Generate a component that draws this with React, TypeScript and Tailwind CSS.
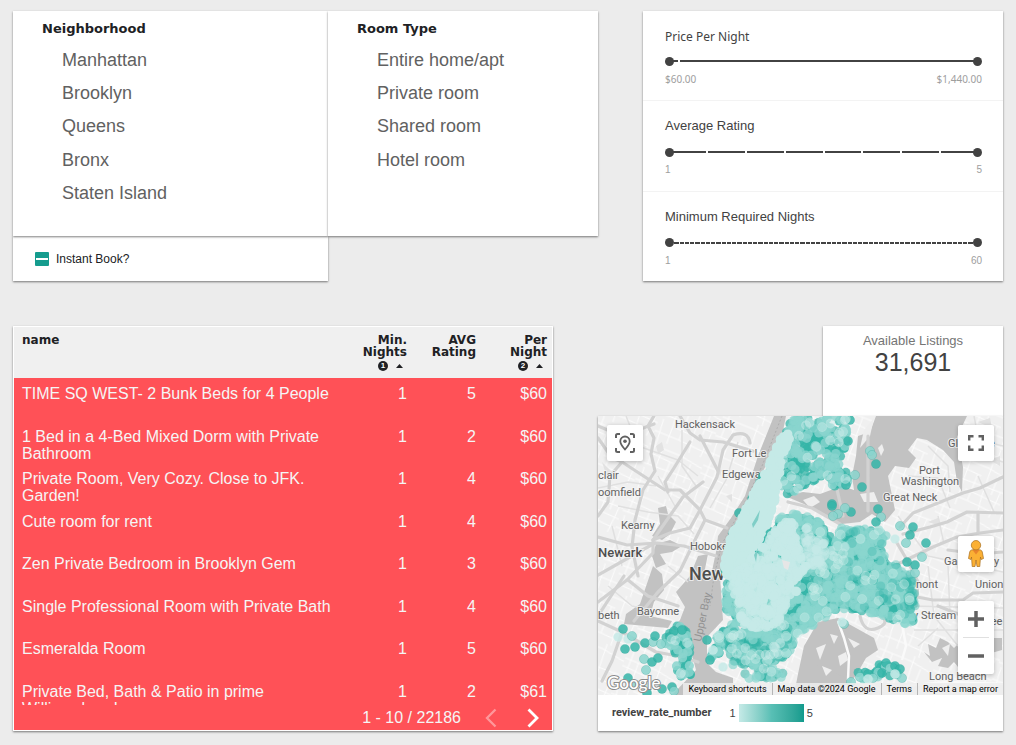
import React from "react";

const card = "bg-white shadow-[0_1px_2px_rgba(0,0,0,0.5)]";

const neighborhoods = ["Manhattan", "Brooklyn", "Queens", "Bronx", "Staten Island"];
const roomTypes = ["Entire home/apt", "Private room", "Shared room", "Hotel room"];

const listings = [
  { name: "TIME SQ WEST- 2 Bunk Beds for 4 People", nights: 1, rating: 5, price: "$60" },
  { name: "1 Bed in a 4-Bed Mixed Dorm with Private Bathroom", nights: 1, rating: 2, price: "$60" },
  { name: "Private Room, Very Cozy. Close to JFK. Garden!", nights: 1, rating: 4, price: "$60" },
  { name: "Cute room for rent", nights: 1, rating: 4, price: "$60" },
  { name: "Zen Private Bedroom in Brooklyn Gem", nights: 1, rating: 3, price: "$60" },
  { name: "Single Professional Room with Private Bath", nights: 1, rating: 4, price: "$60" },
  { name: "Esmeralda Room", nights: 1, rating: 5, price: "$60" },
  { name: "Private Bed, Bath & Patio in prime Williamsburg!", nights: 1, rating: 2, price: "$61" },
];

function FilterList({ title, items }: { title: string; items: string[] }) {
  return (
    <section className={`relative z-10 h-[225px] pl-[29px] ${card}`}>
      <h2 className="pt-[9px] font-['DejaVu_Sans',sans-serif] text-[13px] leading-[18px] font-bold text-[#202124]">
        {title}
      </h2>
      <ul className="mt-[5px] grid h-[167px] grid-rows-5 pl-5">
        {items.map((item) => (
          <li key={item} className="flex items-center">
            <button type="button" className="text-lg leading-6 text-[#616161]">{item}</button>
          </li>
        ))}
      </ul>
    </section>
  );
}

const thumb =
  "pointer-events-none absolute inset-0 h-full w-full appearance-none bg-transparent [&::-webkit-slider-thumb]:pointer-events-auto [&::-webkit-slider-thumb]:h-[9px] [&::-webkit-slider-thumb]:w-[9px] [&::-webkit-slider-thumb]:appearance-none [&::-webkit-slider-thumb]:rounded-full [&::-webkit-slider-thumb]:bg-[#424242]";

type RangeProps = {
  label: string;
  min: number;
  max: number;
  low: string;
  high: string;
  segments: number[];
  humanist?: boolean;
  fine?: boolean;
};

function RangeFilter({ label, min, max, low, high, segments, humanist, fine }: RangeProps) {
  const [from, setFrom] = React.useState(min);
  const [to, setTo] = React.useState(max);
  return (
    <fieldset
      className={`min-w-0 flex-1 border-t border-[#f3f3f3] pr-[21px] pl-[22px] first:border-t-0 ${
        humanist ? "font-['Noto_Sans',sans-serif]" : ""
      }`}
    >
      <div className={`leading-[18px] text-[#424242] ${humanist ? "pt-[17px] text-[12px]" : "pt-4 text-[13px]"}`}>{label}</div>
      <div className={`relative h-[10px] ${humanist ? "mt-[10px]" : "mt-3"}`}>
        <div className={`flex h-full items-center px-1 ${fine ? "gap-px" : "gap-[2px]"}`}>
          {segments.map((grow, i) => (
            <span key={i} className="h-[2px] bg-[#424242]" style={{ flexGrow: grow }} />
          ))}
        </div>
        <input type="range" aria-label={`${label} from`} min={min} max={max} value={from} onChange={(e) => setFrom(Number(e.target.value))} className={thumb} />
        <input type="range" aria-label={`${label} to`} min={min} max={max} value={to} onChange={(e) => setTo(Number(e.target.value))} className={thumb} />
      </div>
      <div className="mt-[6px] flex justify-between text-[10px] leading-[14px] text-[#9e9e9e]">
        <span>{low}</span>
        <span>{high}</span>
      </div>
    </fieldset>
  );
}

function SortMark({ order }: { order: number }) {
  return (
    <span className="mt-[3px] flex items-center justify-end gap-2 pr-1">
      <span className="flex h-[10px] w-[10px] items-center justify-center rounded-full bg-[#202124] font-['Liberation_Sans',sans-serif] text-[8px] leading-[10px] text-white">
        {order}
      </span>
      <svg width="7" height="4" viewBox="0 0 7 4" aria-hidden="true">
        <path d="M0 4 3.500 0 7 4Z" fill="#202124" />
      </svg>
    </span>
  );
}

function ListingsTable() {
  const th = "pt-[7px] pl-2 text-right align-top pr-[5px] leading-[12px]";
  const td = "pt-[7px] pr-[5px] text-right align-top";
  return (
    <section className={`flex h-[405px] flex-col border border-white ${card}`}>
      <div className="h-[378px] overflow-hidden bg-[#ff5157]">
        <table className="w-full table-fixed border-collapse">
          <colgroup>
            <col />
            <col className="w-[70px]" />
            <col className="w-[69px]" />
            <col className="w-[71px]" />
          </colgroup>
          <thead>
            <tr className="h-[51px] bg-[#f0f0f0] font-['DejaVu_Sans',sans-serif] text-[12px] text-[#202124]">
              <th className="pt-[7px] pl-2 text-left align-top leading-[12px]">name</th>
              <th className={th}>Min. Nights<SortMark order={1} /></th>
              <th className={th}>AVG Rating</th>
              <th className={th}>Per Night<SortMark order={2} /></th>
            </tr>
          </thead>
          <tbody className="text-base leading-[17px] text-[#f5f5f5]">
            {listings.map((l) => (
              <tr key={l.name} className="odd:h-[43px] even:h-[42px]">
                <td className="pt-[7px] pr-1 pl-2 align-top">{l.name}</td>
                <td className={td}>{l.nights}</td>
                <td className={td}>{l.rating}</td>
                <td className={td}>{l.price}</td>
              </tr>
            ))}
          </tbody>
        </table>
      </div>
      <footer className="flex flex-1 items-center justify-end bg-[#ff5157] pr-[13px] text-base leading-5 text-[#f5f5f5]">
        <span>1 - 10 / 22186</span>
        <button type="button" aria-label="Previous page" className="ml-6 opacity-40">
          <svg width="12" height="20" viewBox="0 0 12 20" fill="none" stroke="#fff" strokeWidth="2.300"><path d="M10.500 1.500 2 10 10.500 18.500" /></svg>
        </button>
        <button type="button" aria-label="Next page" className="ml-[30px]">
          <svg width="12" height="20" viewBox="0 0 12 20" fill="none" stroke="#fff" strokeWidth="2.800"><path d="M1.500 1.500 10 10 1.500 18.500" /></svg>
        </button>
      </footer>
    </section>
  );
}

type Point = [number, number];
type Dot = { x: number; y: number; fill: string; opacity: number; ring: boolean };

const DARK = "#35b5a8";
const MID = "#8ad5ce";
const LIGHT = "#c5eae7";

function makeRandom(seed: number) {
  let s = seed;
  return () => {
    s = (s * 1664525 + 1013904223) % 4294967296;
    return s / 4294967296;
  };
}

function inside(x: number, y: number, poly: Point[]) {
  let hit = false;
  for (let i = 0, j = poly.length - 1; i < poly.length; j = i++) {
    const [xi, yi] = poly[i];
    const [xj, yj] = poly[j];
    if (yi > y !== yj > y && x < ((xj - xi) * (y - yi)) / (yj - yi) + xi) hit = !hit;
  }
  return hit;
}

function scatter(poly: Point[], count: number, seed: number, fill: string, opacity: number, ring = false): Dot[] {
  const rnd = makeRandom(seed);
  const xs = poly.map((p) => p[0]);
  const ys = poly.map((p) => p[1]);
  const x0 = Math.min(...xs);
  const y0 = Math.min(...ys);
  const w = Math.max(...xs) - x0;
  const h = Math.max(...ys) - y0;
  const dots: Dot[] = [];
  let guard = 0;
  while (dots.length < count && guard++ < count * 30) {
    const x = x0 + rnd() * w;
    const y = y0 + rnd() * h;
    if (inside(x, y, poly)) dots.push({ x, y, fill, opacity, ring });
  }
  return dots;
}

const bronx: Point[] = [[190, 5], [196, 1], [222, 1], [226, 6], [230, 0], [248, 0], [249, 22], [246, 38], [243, 48], [252, 62], [246, 72], [236, 72], [228, 60], [212, 66], [203, 72], [190, 80], [183, 76], [184, 40]];
const outer: Point[] = [[165, 125], [180, 104], [188, 98], [206, 98], [222, 106], [230, 118], [236, 124], [243, 112], [262, 112], [283, 114], [290, 122], [282, 132], [292, 146], [306, 155], [315, 165], [316, 205], [306, 208], [290, 202], [270, 197], [256, 194], [240, 192], [224, 204], [210, 212], [200, 217], [192, 236], [184, 244], [172, 246], [160, 250], [143, 246], [130, 232], [126, 230], [115, 246], [112, 240], [118, 226], [114, 222], [126, 214], [136, 204], [126, 190], [128, 168]];
const manhattan: Point[] = [[184, 20], [190, 18], [194, 22], [184, 40], [181, 66], [177, 86], [171, 104], [161, 125], [152, 150], [137, 160], [128, 160], [125, 150], [133, 120], [147, 94], [166, 56], [178, 32]];
const brooklynLight: Point[] = [[158, 138], [174, 118], [186, 104], [196, 106], [200, 122], [202, 140], [210, 150], [200, 160], [204, 172], [192, 182], [186, 192], [182, 206], [168, 212], [152, 212], [138, 206], [144, 190], [130, 176], [132, 162]];
const queensLight: Point[] = [[205, 110], [222, 116], [230, 134], [240, 130], [250, 130], [240, 140], [226, 150], [214, 150], [206, 138]];
const south: Point[] = [[128, 216], [190, 208], [190, 236], [178, 250], [190, 262], [150, 264], [134, 250]];
const east: Point[] = [[240, 114], [284, 114], [318, 160], [317, 208], [255, 190]];
const eastEdge: Point[] = [[306, 158], [316, 166], [318, 208], [300, 208], [312, 196], [308, 176]];
const statenEast: Point[] = [[78, 208], [88, 210], [90, 225], [96, 240], [92, 254], [96, 262], [82, 264], [78, 250], [76, 232], [66, 228], [68, 220]];
const rockaway: Point[] = [[260, 256], [276, 256], [284, 245], [298, 250], [302, 260], [284, 260], [262, 266]];

const strays: [number, number, string][] = [
  [252, 4, DARK], [250, 25, DARK], [272, 35, MID], [274, 39, MID], [278, 48, DARK], [264, 71, DARK], [257, 59, MID], [248, 69, DARK], [234, 88, DARK], [240, 98, MID], [253, 96, DARK], [247, 92, MID], [234, 90, DARK], [235, 100, MID],
  [280, 93, DARK], [283, 101, MID], [278, 106, DARK], [302, 110, MID], [315, 111, DARK], [312, 119, DARK], [308, 127, MID], [328, 127, DARK], [324, 141, MID], [317, 149, DARK], [309, 146, DARK], [317, 157, MID], [297, 123, LIGHT],
  [25, 213, DARK], [20, 221, LIGHT], [30, 223, LIGHT], [27, 233, DARK], [37, 231, DARK], [34, 220, MID], [47, 227, DARK], [55, 226, MID], [63, 228, MID], [57, 220, DARK], [72, 221, DARK], [76, 215, DARK], [84, 214, DARK], [46, 243, MID], [54, 246, DARK], [60, 242, DARK], [48, 254, MID], [30, 262, DARK], [35, 269, MID], [47, 269, LIGHT], [49, 277, DARK], [64, 273, DARK], [74, 271, DARK], [76, 275, MID],
  [246, 208, MID], [244, 206, LIGHT], [253, 266, MID], [262, 261, MID], [270, 258, DARK], [275, 262, MID], [284, 257, DARK], [288, 247, DARK], [292, 252, MID], [297, 250, DARK], [302, 253, DARK], [304, 262, MID], [297, 258, LIGHT], [270, 263, LIGHT],
  [141, 97, DARK], [125, 251, LIGHT], [112, 244, DARK], [109, 224, DARK], [115, 234, LIGHT],
];

const dots: Dot[] = [
  ...scatter(bronx, 170, 3, DARK, 0.75),
  ...scatter(outer, 620, 5, DARK, 0.7),
  ...scatter(manhattan, 70, 8, DARK, 0.8),
  ...scatter(statenEast, 42, 9, DARK, 0.75),
  ...scatter(rockaway, 20, 12, DARK, 0.8),
  ...scatter(bronx, 105, 13, MID, 0.8),
  ...scatter(outer, 800, 17, MID, 0.7),
  ...scatter(statenEast, 18, 19, MID, 0.85),
  ...scatter(rockaway, 8, 21, MID, 0.8),
  ...scatter(south, 60, 23, DARK, 0.55),
  ...scatter(south, 40, 24, MID, 0.7),
  ...scatter(east, 34, 25, DARK, 0.35),
  ...scatter(eastEdge, 14, 26, DARK, 0.4),
  ...strays.map(([x, y, fill]) => ({ x, y, fill, opacity: 0.85, ring: true })),
  ...scatter(bronx, 20, 29, LIGHT, 0.5, true),
  ...scatter(outer, 85, 31, LIGHT, 0.45, true),
  ...scatter(south, 12, 32, LIGHT, 0.5, true),
  ...scatter(statenEast, 5, 33, LIGHT, 0.5, true),
  ...scatter(queensLight, 45, 37, LIGHT, 0.55),
  ...scatter(manhattan, 420, 41, LIGHT, 1),
  ...scatter(brooklynLight, 330, 43, LIGHT, 0.85),
];

const toPath = (poly: Point[]) => `M${poly.map((p) => p.join(" ")).join("L")}Z`;

const highways = [
  "M0 22 14 42 24 46 67 74 82 74 102 94 107 104 129 112",
  "M92 26 76 52 67 66 70 76",
  "M152 27Q150 14 135 19L125 34 119 61 102 94 92 112 72 117 55 124 55 137 29 164 0 186",
  "M82 0 92 17 102 24 125 26 138 30 155 35",
  "M56 0 50 10 56 22 53 38 57 55 45 74 37 104 34 131 40 160",
  "M0 121 29 129 59 127 86 130 118 140",
  "M0 159 39 137 57 127",
  "M105 66 85 81 64 111 55 124",
  "M107 104 97 124 82 155 60 176 36 205",
  "M102 20 120 55",
  "M0 100 10 86 12 60 24 46",
  "M0 10 24 20 56 8",
  "M26 160 0 200M30 164 50 180 80 190",
  "M0 205 24 216 58 236 80 240 100 246",
  "M24 216 14 245 4 265",
  "M405 61 382 72 365 77 335 89 315 97 302 111",
  "M405 97 369 96 349 106 332 111 305 118",
  "M405 114 382 117 359 121 335 131 302 147",
  "M380 96 380 117",
  "M299 127 309 144 320 166 319 181 335 184 365 184 375 177 405 176",
  "M405 206 370 202 340 190",
  "M270 20V95M236 60 245 100",
  "M190 86 214 92 242 108",
  "M405 136 380 138 350 134",
  "M262 200Q266 218 280 212T280 198",
];

const sideRoads = "M28 0 40 30 80 44 100 60M0 72 30 66 58 70M20 90 50 96 80 100 96 118M14 110 24 150M60 60 78 92M140 26 128 64 112 92M70 150 90 166M10 170 34 190 60 196M310 60 340 62 352 92M330 30 350 50 352 76M366 20 405 30M376 0 384 40 405 46M300 100 330 140 405 156M330 150 336 200 360 230M350 150 352 200M312 190 405 192M316 214 405 214M320 230 340 212M84 14 84 50 98 70M380 60 396 96M340 100 346 128";

const water = [
  "M176 0H188L184 20 165 55 145 93 128 130 122 160 125 204 109 221 109 247 118 256 135 262V279H74L98 254 92 231 69 217 82 204 87 191 78 176 92 160 100 140 110 138 106 158 114 155 118 136 120 120 133 102 147 80 160 40Z",
  "M60 92 68 90 70 98 78 106 72 118 64 124 54 120 62 108Z",
  "M58 128 72 124 84 130 74 136 62 138 68 148 58 152 54 140Z",
  "M55 150 64 158 66 174 56 186 52 200 74 205 70 212 26 208 28 198 42 188Z",
  "M187 80 205 76 222 78 244 70 256 74 254 60 258 40 260 20 272 16 278 0H369L359 21 365 51 364 76 359 66 356 46 345 34 329 24 319 22 310 34 318 42 311 52 297 50 290 60 297 94 287 106 274 98 262 106 244 108 226 100 206 88Z",
  "M200 258 206 230 220 206 240 202 258 212 276 222 280 234 268 242 260 256 252 268 196 279Z",
  "M215 248 248 262 240 279H190Z",
  "M326 236 332 240 330 228 338 232 342 222 350 226 356 232 362 226 380 230 386 222 404 222V234L390 238 380 250 364 256 356 246 350 252 340 250 344 242 334 246Z",
];

const islands = [
  "M262 78 276 76 280 86 266 86Z",
  "M205 84 216 80 222 86 212 92Z",
  "M266 14 276 2 272 20 262 32Z",
  "M232 218 240 220 236 228Z",
  "M218 232 228 228 222 244Z",
  "M250 222 262 228 256 232Z",
  "M240 240 248 236 250 244 242 250Z",
  "M224 250 234 254 228 260Z",
  "M344 232 352 228 350 240Z",
  "M366 232 376 234 370 240Z",
  "M284 28 286 34 283 40 280 32Z",
];

const labels: [number, number, string][] = [
  [77, 12, "Hackensack"], [134, 41, "Fort Le"], [124, 62, "Edgewa"], [0, 63, "clair"], [0, 80, "oomfield"], [23, 113, "Kearny"],
  [92, 134, "Hoboke"], [39, 199, "Bayonne"], [0, 203, "beth"], [321, 58, "Port"], [303, 69, "Washington"],
  [285, 85, "Great Neck"], [350, 31, "Gl"], [391, 31, "e"], [346, 149, "Ga"], [396, 149, "y"], [318, 172, "nont"],
  [377, 172, "Union"], [315, 203, "y Stream"], [389, 209, "ree"], [331, 264, "Long Beach"],
];

function MapDrawing() {
  return (
    <svg viewBox="0 0 405 279" preserveAspectRatio="xMidYMid slice" className="block h-full w-full font-['Roboto',sans-serif]" role="img" aria-label="Map of listings">
      <defs>
        <pattern id="streets" width="58" height="52" patternUnits="userSpaceOnUse" patternTransform="rotate(22)">
          <path d="M0 6H34L58 10M0 14 30 16M0 26 58 24M20 34 58 36M0 44H26L58 46M6 0V26M14 6 16 52M26 16V44M36 0 38 36M46 10V30M54 24 52 52M38 36 40 52M4 30 6 52" stroke="#fdfdfd" strokeWidth=".9" fill="none" />
        </pattern>
      </defs>
      <rect width="405" height="279" fill="#f0f0f0" />
      <rect width="405" height="279" fill="url(#streets)" />
      <g fill="#e2e2e2">
        <path d="M58 30 64 26 66 34 60 38ZM118 52 124 54 122 60ZM128 80 134 78 134 86ZM4 46 14 56 10 64ZM380 6 392 2 394 12ZM330 106 340 102 342 110ZM392 44 402 40 402 50Z" />
      </g>
      <g fill="#c2c2c2">{water.map((d) => <path key={d} d={d} />)}</g>
      <g fill="#eeeeee">{islands.map((d) => <path key={d} d={d} />)}</g>
      <path d={sideRoads} fill="none" stroke="#e0e0e0" strokeWidth="1.500" strokeLinejoin="round" />
      <g fill="none" stroke="#d2d2d2" strokeWidth="3.200" strokeLinejoin="round" strokeLinecap="round">
        {highways.map((d) => <path key={d} d={d} />)}
      </g>
      <path d="M240 205 246 222 251 240 250 264M306 270 350 266 405 268M304 208 308 230 304 244" fill="none" stroke="#fafafa" strokeWidth="2.500" />
      <path d="M184 0 164 50 148 84 124 128 116 160 112 190" fill="none" stroke="#9e9e9e" strokeWidth=".6" strokeDasharray="2 2" />
      <g fill="#616161" stroke="#f5f5f5" strokeWidth="2" strokeOpacity=".8" paintOrder="stroke" fontSize="11">
        {labels.map(([x, y, text]) => <text key={text + x} x={x} y={y}>{text}</text>)}
        <g fontWeight="500" fill="#4e4e4e">
          <text x="0" y="141" fontSize="13">Newark</text>
          <text x="91" y="164" fontSize="18">New</text>
        </g>
      </g>
      <text transform="translate(103 226) rotate(-78)" fontSize="11" fill="#939393">Upper Bay</text>
      <path d={toPath(outer)} fill="#7accc4" />
      <path d={toPath(manhattan)} fill={LIGHT} />
      {dots.map((d, i) => (
        <circle key={i} cx={d.x} cy={d.y} r="4.600" fill={d.fill} fillOpacity={d.opacity} stroke={d.ring ? (d.fill === LIGHT ? "#d8f1ef" : "#239e92") : "none"} strokeOpacity=".35" strokeWidth=".7" />
      ))}
      <path d="M154 108 162 94 160 104 155 112ZM156 139 160 132 158 146Z" fill="#7fcec7" />
      <path d="M184 144 192 146 190 154 186 152ZM140 210 144 211 142 214Z" fill="#e6e6e6" />
      <text x="9" y="273" fontSize="17" fontWeight="500" fontFamily="Lato, sans-serif" fill="#fff" stroke="#8c8c8c" strokeWidth="2" paintOrder="stroke">Google</text>
    </svg>
  );
}

const control = "flex h-9 w-9 items-center justify-center rounded-[2px] bg-white shadow-[0_1px_4px_rgba(0,0,0,0.25)]";

function MapCard() {
  return (
    <section className={`flex h-[315px] flex-col ${card}`}>
      <div className="relative h-[279px] overflow-hidden">
        <MapDrawing />
        <button type="button" aria-label="Reset map view" className={`absolute top-[9px] left-[9px] ${control}`}>
          <svg width="22" height="22" viewBox="0 0 22 22" fill="none" stroke="#616161" strokeWidth="2">
            <path d="M6 2H3.500Q2 2 2 3.500V6M16 2H18.500Q20 2 20 3.500V6M2 16V18.500Q2 20 3.500 20H6M20 16V18.500Q20 20 18.500 20H16" />
            <path d="M11 17.500C7.500 13.500 6.300 11.500 6.300 9.200A4.700 4.700 0 0 1 15.700 9.200C15.700 11.500 14.500 13.500 11 17.500Z" strokeWidth="1.800" />
            <circle cx="11" cy="9.200" r="1.800" fill="#616161" stroke="none" />
          </svg>
        </button>
        <button type="button" aria-label="Toggle fullscreen" className={`absolute top-[9px] right-[9px] ${control}`}>
          <svg width="16" height="16" viewBox="0 0 16 16" fill="none" stroke="#616161" strokeWidth="2.400">
            <path d="M1.200 5.500V1.200H5.500M10.500 1.200H14.800V5.500M1.200 10.500V14.800H5.500M10.500 14.800H14.800V10.500" />
          </svg>
        </button>
        <button type="button" aria-label="Street View" className={`absolute top-[120px] right-[9px] ${control}`}>
          <svg width="18" height="28" viewBox="0 0 18 28" stroke="#a86e20" strokeWidth=".7">
            <path d="M4.500 10Q9 8.500 13.500 10Q15 10.500 15.300 12L16.500 18.500 14 19.500 13.500 17 12.800 26.500H10L9 20 8 26.500H5.200L4.500 17 4 19.500 1.500 18.500 2.700 12Q3 10.500 4.500 10Z" fill="#fbb034" />
            <path d="M5.500 10 9 14.500 12.500 10Z" fill="#e8842c" stroke="none" />
            <circle cx="9" cy="5.200" r="4.700" fill="#fbb034" />
          </svg>
        </button>
        <div className="absolute top-[185px] right-[9px] flex h-[73px] w-9 flex-col rounded-[2px] bg-white px-[5px] shadow-[0_1px_4px_rgba(0,0,0,0.25)]">
          <button type="button" aria-label="Zoom in" className="flex flex-1 items-center justify-center">
            <svg width="16" height="16" viewBox="0 0 16 16"><path d="M8 0V16M0 8H16" stroke="#616161" strokeWidth="3.500" /></svg>
          </button>
          <div className="h-px bg-[#e0e0e0]" />
          <button type="button" aria-label="Zoom out" className="flex flex-1 items-center justify-center">
            <svg width="16" height="4" viewBox="0 0 16 4"><path d="M0 2H16" stroke="#616161" strokeWidth="3.500" /></svg>
          </button>
        </div>
        <div className="absolute right-0 bottom-0 flex h-3 divide-x divide-[#b5b5b5] bg-[#ededed]/85 font-['Roboto',sans-serif] text-[9px] leading-3 whitespace-nowrap text-black">
          <button type="button" className="px-[5px]">Keyboard shortcuts</button>
          <span className="px-[5px]">Map data ©2024 Google</span>
          <a href="#terms" className="px-[5px]">Terms</a>
          <a href="#report" className="px-[5px]">Report a map error</a>
        </div>
      </div>
      <div className="flex flex-1 items-center pl-[14px] text-[#424242]">
        <span className="font-['Roboto',sans-serif] text-[11px] font-bold">review_rate_number</span>
        <span className="ml-[18px] text-[11px]">1</span>
        <span className="mx-[3px] h-[18px] w-[65px] bg-gradient-to-r from-[#c5eae7] via-[#58bfb5] to-[#109b8d]" />
        <span className="text-[11px]">5</span>
      </div>
    </section>
  );
}

export default function App() {
  const checkbox = React.useRef<HTMLInputElement>(null);
  React.useEffect(() => {
    if (checkbox.current) checkbox.current.indeterminate = true;
  }, []);
  return (
    <main className="min-h-screen bg-[#ececec] px-[13px] pt-[11px] pb-[14px] font-['Liberation_Sans',Arial,sans-serif]">
      <div className="grid grid-cols-[585fr_360fr] gap-x-[45px]">
        <div className="grid grid-cols-[315fr_270fr]">
          <FilterList title="Neighborhood" items={neighborhoods} />
          <FilterList title="Room Type" items={roomTypes} />
          <label className={`flex h-[45px] items-center gap-[7px] pl-[22px] text-xs text-[#202124] ${card}`}>
            <input
              ref={checkbox}
              type="checkbox"
              className="h-[14px] w-[14px] appearance-none rounded-[1px] bg-[#159c8e] bg-[linear-gradient(#fff,#fff)] bg-[length:12px_2px] bg-center bg-no-repeat"
            />
            Instant Book?
          </label>
        </div>
        <div className={`flex h-[270px] flex-col ${card}`}>
          <RangeFilter label="Price Per Night" min={60} max={1440} low="$60.00" high="$1,440.00" segments={[9, 297]} humanist />
          <RangeFilter label="Average Rating" min={1} max={5} low="1" high="5" segments={Array(8).fill(1)} />
          <RangeFilter label="Minimum Required Nights" min={1} max={60} low="1" high="60" segments={Array(59).fill(1)} fine />
        </div>
      </div>
      <div className="mt-[45px] grid grid-cols-[540fr_405fr] gap-x-[45px]">
        <ListingsTable />
        <div>
          <section className={`ml-auto h-[90px] w-4/9 pt-[6px] text-center ${card}`}>
            <h2 className="text-[13px] leading-[18px] text-[#757575]">Available Listings</h2>
            <p className="text-[25px] leading-[25px] text-[#424242]">31,691</p>
          </section>
          <MapCard />
        </div>
      </div>
    </main>
  );
}
